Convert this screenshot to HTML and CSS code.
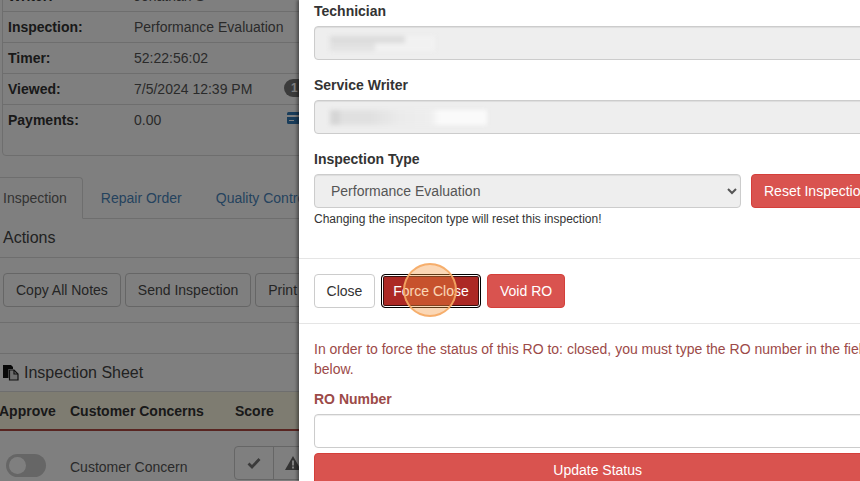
FILE: index.html
```html
<!DOCTYPE html>
<html lang="en">
<head>
<meta charset="utf-8">
<title>Force Close</title>
<link rel="stylesheet" href="styles.css">
</head>
<body>
<div class="page">
  <section class="back">
    <div class="info">
      <div class="row"><b>Writer:</b><span>Jonathan S</span></div>
      <div class="row"><b>Inspection:</b><span>Performance Evaluation</span></div>
      <div class="row"><b>Timer:</b><span>52:22:56:02</span></div>
      <div class="row"><b>Viewed:</b><span>7/5/2024 12:39 PM</span><i class="badge">1</i></div>
      <div class="row"><b>Payments:</b><span>0.00</span>
        <svg class="card" width="14" height="14" viewBox="0 0 14 14"><rect y="1" width="14" height="12" rx="1.5" fill="#337ab7"/><rect y="4" width="14" height="2" fill="#fff"/><rect x="2" y="9" width="5" height="1" fill="#fff"/></svg>
      </div>
    </div>
    <nav class="tabs">
      <a class="tab active">Inspection</a>
      <a class="tab">Repair Order</a>
      <a class="tab">Quality Control</a>
    </nav>
    <h3 class="head actions-head">Actions</h3>
    <div class="tools">
      <button class="btn soft">Copy All Notes</button>
      <button class="btn soft">Send Inspection</button>
      <button class="btn soft">Print</button>
    </div>
    <div class="spacer"></div>
    <h3 class="head sheet-head">
      <svg width="16" height="17" viewBox="0 0 16 17"><path d="M0 1h8l2 2v2H5.500v9H0z" fill="#111"/><path d="M6.500 6H11l4 4v6H6.500z" fill="#ddd" stroke="#222" stroke-width="1.200"/><path d="M11 6v4h4" fill="none" stroke="#222" stroke-width="1.200"/></svg>
      Inspection Sheet
    </h3>
    <div class="thead"><b>Approve</b><b>Customer Concerns</b><b>Score</b></div>
    <div class="tbody">
      <span class="toggle"><i></i></span>
      <span class="concern">Customer Concern</span>
      <span class="group">
        <span class="seg"><svg width="14" height="12" viewBox="0 0 14 12"><path d="M1.500 6.500 5 10l7.500-8" fill="none" stroke="#777" stroke-width="2.800"/></svg></span>
        <span class="seg"><svg width="16" height="14" viewBox="0 0 16 14"><path d="M8 0 16 14H0z" fill="#666"/><rect x="7" y="4.500" width="2" height="5" fill="#fff"/><rect x="7" y="10.500" width="2" height="2" fill="#fff"/></svg></span>
      </span>
    </div>
    <div class="dim"></div>
  </section>

  <section class="panel">
    <div class="body-top">
      <label class="lbl first">Technician</label>
      <div class="field locked"><i class="blur b1"></i></div>
      <label class="lbl">Service Writer</label>
      <div class="field locked"><i class="blur b3"></i></div>
      <label class="lbl">Inspection Type</label>
      <div class="type-row">
        <select class="field type"><option>Performance Evaluation</option></select>
        <button class="btn danger reset">Reset Inspection</button>
      </div>
      <p class="help">Changing the inspeciton type will reset this inspection!</p>
    </div>
    <div class="foot">
      <button class="btn light">Close</button>
      <button class="btn danger focus">Force Close</button>
      <button class="btn danger">Void RO</button>
      <span class="ring"></span>
    </div>
    <div class="force">
      <p class="msg">In order to force the status of this RO to: closed, you must type the RO number in the field below.</p>
      <label class="lbl ro">RO Number</label>
      <input class="field entry" type="text">
      <button class="btn danger update">Update Status</button>
    </div>
  </section>
</div>
</body>
</html>
```
FILE: styles.css
```css
* { box-sizing: border-box; }
html, body { margin: 0; height: 100%; overflow: hidden; }
body { font: 14px/20px "Liberation Sans", Arial, sans-serif; color: #333; background: #fff; }
.page { display: flex; width: 860px; height: 481px; overflow: hidden; }

/* dimmed page behind the drawer */
.back { position: relative; flex: 0 0 299px; height: 481px; overflow: hidden; background: #fff; }
.dim { position: absolute; inset: 0; background: rgba(0, 0, 0, .5); }
.info { margin: -20px -30px 0 2px; height: 176px; border: 1px solid #ddd; border-radius: 4px; }
.row { display: flex; align-items: center; height: 31px; padding: 0 5px; border-bottom: 1px solid #ddd; }
.row:last-child { border-bottom-color: transparent; }
.row b { flex: 0 0 126px; }
.row span { flex: 0 0 150px; white-space: nowrap; color: #555; }
.badge { display: block; flex: none; margin-top: -2px; width: 24px; height: 18px; border-radius: 9px; background: #777; color: #fff; font: bold 12px/18px "Liberation Sans", sans-serif; padding-left: 7px; }
.card { flex: none; margin: -4px 0 0 3px; }
.tabs { display: flex; margin: 21px -40px 0 -13px; height: 42px; border-bottom: 1px solid #ddd; white-space: nowrap; }
.tab { display: block; height: 42px; padding: 10px 15px; margin-right: 2px; border: 1px solid transparent; color: #4a86bd; }
.tab.active { color: #666; background: #fff; border-color: #ddd #ddd #fff; border-radius: 4px 4px 0 0; }
.head { margin: 0; font-size: 16px; font-weight: 400; line-height: 20px; color: #444; }
.actions-head { height: 39px; padding: 9px 0 0 3px; border-bottom: 1px solid #ddd; }
.tools { display: flex; gap: 4px; height: 65px; padding: 15px 0 0 3px; border-bottom: 1px solid #ddd; white-space: nowrap; }
.btn { flex: none; height: 34px; padding: 6px 12px; border: 1px solid #ccc; border-radius: 4px; background: #fff; color: #333; font: 14px/20px "Liberation Sans", Arial, sans-serif; white-space: nowrap; }
.soft { color: #4a4a4a; }
.spacer { height: 31px; border-bottom: 1px solid #ddd; }
.sheet-head { display: flex; align-items: center; gap: 5px; height: 38px; padding: 0 0 0 3px; border-bottom: 1px solid #ddd; }
.thead { display: grid; grid-template-columns: 70px 165px 60px; align-items: center; height: 39px; background: #fcf8e3; border-bottom: 2px solid #b04a42; white-space: nowrap; }
.thead b:first-child { margin-left: -1px; }
.tbody { display: grid; grid-template-columns: 70px 164px 70px; align-items: start; height: 50px; padding-top: 15px; white-space: nowrap; }
.toggle { display: block; margin: 8px 0 0 6px; width: 40px; height: 23px; border-radius: 12px; background: #ccc; padding: 3px; }
.toggle i { display: block; width: 17px; height: 17px; border-radius: 50%; background: #fff; }
.concern { margin-top: 11px; color: #555; }
.group { display: flex; }
.seg { display: flex; align-items: center; justify-content: center; flex: none; width: 40px; height: 34px; border: 1px solid #ccc; margin-right: -1px; background: #fff; }
.seg:first-child { border-radius: 4px 0 0 4px; }

/* drawer */
.panel { flex: 0 0 596px; height: 481px; background: #fff; box-shadow: -2px 0 3px rgba(0, 0, 0, .4); position: relative; }
.body-top { height: 259px; padding: 1px 15px 0; border-bottom: 1px solid #e5e5e5; }
.lbl { display: block; font-weight: 700; height: 20px; margin: 15px 0 5px; }
.lbl.first { margin-top: 0; }
.field { display: block; width: 100%; height: 34px; border: 1px solid #ccc; border-radius: 4px; background: #eee; box-shadow: inset 0 1px 1px rgba(0, 0, 0, .075); color: #555; font: 14px/20px "Liberation Sans", Arial, sans-serif; padding: 6px 12px; }
.locked { display: flex; align-items: center; }
.blur { display: block; height: 15px; margin-left: 3px; filter: blur(2px); }
.b1 { width: 105px; background: linear-gradient(90deg, #dcdcdc 0 75px, transparent 75px) 0 0 / 100% 7px no-repeat, linear-gradient(90deg, #e2e2e2 0 45px, #f1f1f1 45px); }
.b3 { width: 157px; background: linear-gradient(90deg, #d6d6d6 0 10px, #e0e0e0 10px 40px, #ebebeb 70px, #eeeeee 100px, #fafafa 110px); }
.type-row { display: flex; gap: 10px; }
.type { flex: 0 0 427px; width: 427px; }
.danger { background: #d9534f; border-color: #d43f3a; color: #fff; }
.help { margin: 1px 0 0; font-size: 12px; line-height: 20px; }
.foot { position: relative; display: flex; gap: 6px; height: 65px; padding: 15px 15px 0; border-bottom: 1px solid #e5e5e5; }
.light { width: 61px; padding: 6px 0; color: #333; }
.focus { width: 100px; padding: 6px 0; background: #ac2925; border-color: #000; box-shadow: inset 0 0 0 1px #fff, inset 0 0 0 2px #3a0f0d; }
.ring { position: absolute; left: 104px; top: 4px; width: 54px; height: 54px; border-radius: 50%; border: 2px solid rgba(245, 170, 100, .9); background: rgba(245, 150, 60, .38); }
.force { padding: 15px 15px 0; }
.msg { margin: 0; color: #9c4a48; }
.ro { color: #9c4a48; margin: 10px 0 5px; }
.entry { background: #fff; }
.update { display: block; width: 100%; margin-top: 5px; }
```
